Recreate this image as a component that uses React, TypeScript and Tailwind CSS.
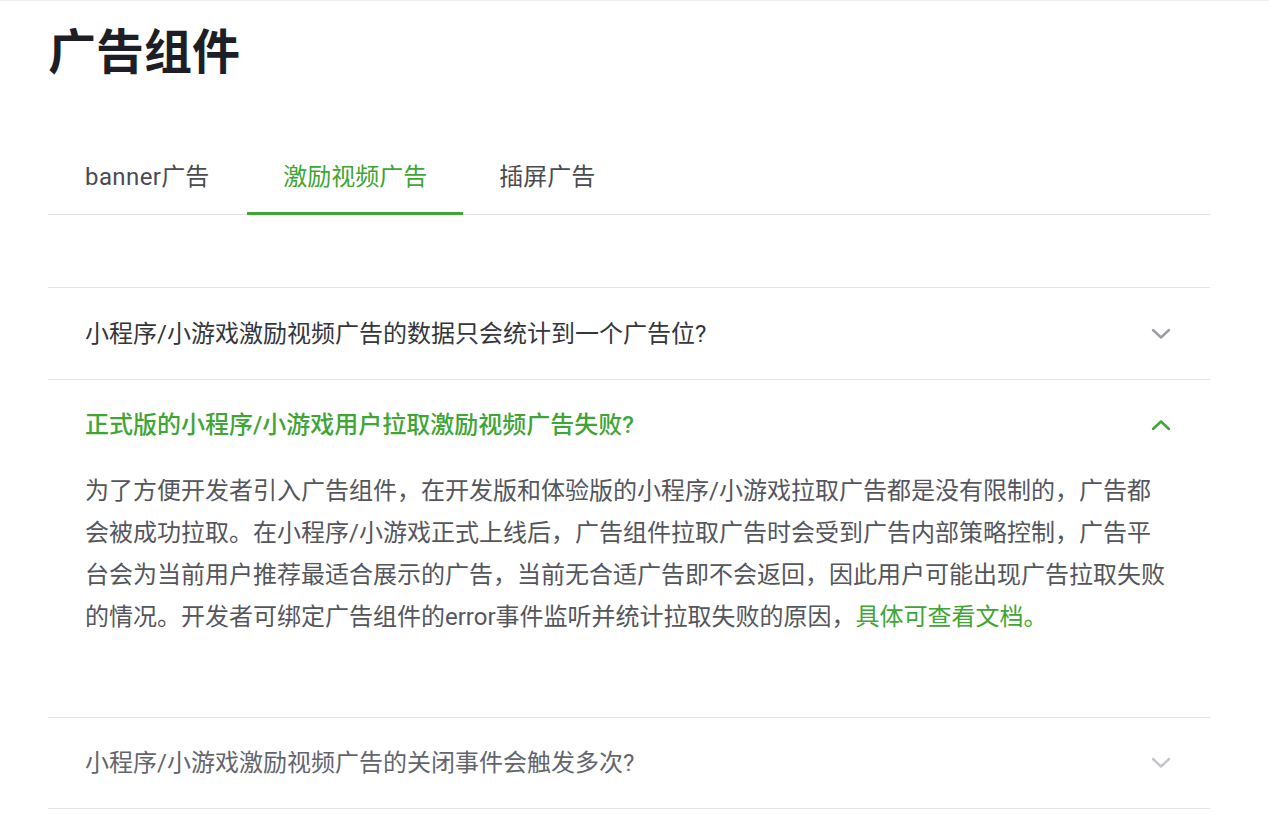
import React from "react";

const FONT = { fontFamily: 'Roboto, "Noto Sans CJK SC", sans-serif' };

function Chevron({ up, color }: { up?: boolean; color: string }) {
  return (
    <svg width="20" height="12" viewBox="0 0 20 12" fill="none">
      <path
        d={up ? "M2 10 L10 2.5 L18 10" : "M2 2 L10 9.5 L18 2"}
        stroke={color}
        strokeWidth="2.4"
        strokeLinecap="round"
        strokeLinejoin="round"
      />
    </svg>
  );
}

export default function App() {
  return (
    <div className="w-full min-h-[814px] bg-white border-t border-[#efeff2]" style={FONT}>
      <div className="pl-12 pr-[59px]">
        <h1 className="pt-[28px] text-[48px] leading-[48px] font-bold text-[#1e1f26]">广告组件</h1>

        <div className="mt-[65px] flex border-b border-[#e3e3e8]">
          <div className="h-[73px] -mb-px pl-[37px] pr-[38px] flex items-center border-b-[3px] border-transparent text-[24px] text-[#4a4b52]">
            <span className="tracking-[0.4px]">banner</span>广告
          </div>
          <div className="h-[73px] -mb-px px-9 flex items-center border-b-[3px] border-[#3fa535] text-[24px] text-[#3fa535]">
            激励视频广告
          </div>
          <div className="h-[73px] -mb-px px-9 flex items-center border-b-[3px] border-transparent text-[24px] text-[#4a4b52]">
            插屏广告
          </div>
        </div>

        <div className="mt-[72px] border-t border-[#e3e3e8]">
          <div className="border-b border-[#e3e3e8]">
            <div className="h-[91px] pl-[37px] pr-[39px] flex items-center justify-between">
              <span className="text-[24px] text-[#35363c]">小程序/小游戏激励视频广告的数据只会统计到一个广告位?</span>
              <Chevron color="#9c9ea8" />
            </div>
          </div>

          <div className="border-b border-[#e3e3e8]">
            <div className="h-[90px] pl-[37px] pr-[39px] flex items-center justify-between">
              <span className="text-[24px] font-medium text-[#3fa535]">正式版的小程序/小游戏用户拉取激励视频广告失败?</span>
              <Chevron up color="#3fa535" />
            </div>
            <p className="pl-[37px] pr-[40px] pb-[79px] text-[24px] leading-[42px] text-[#55565c]">
              为了方便开发者引入广告组件，在开发版和体验版的小程序/小游戏拉取广告都是没有限制的，广告都会被成功拉取。在小程序/小游戏正式上线后，广告组件拉取广告时会受到广告内部策略控制，广告平台会为当前用户推荐最适合展示的广告，当前无合适广告即不会返回，因此用户可能出现广告拉取失败的情况。开发者可绑定广告组件的error事件监听并统计拉取失败的原因，<span className="text-[#3fa535]">具体可查看文档。</span>
            </p>
          </div>

          <div className="border-b border-[#e3e3e8]">
            <div className="h-[90px] pl-[37px] pr-[39px] flex items-center justify-between">
              <span className="text-[24px] text-[#64656c]">小程序/小游戏激励视频广告的关闭事件会触发多次?</span>
              <Chevron color="#c4c6cf" />
            </div>
          </div>
        </div>
      </div>
    </div>
  );
}
